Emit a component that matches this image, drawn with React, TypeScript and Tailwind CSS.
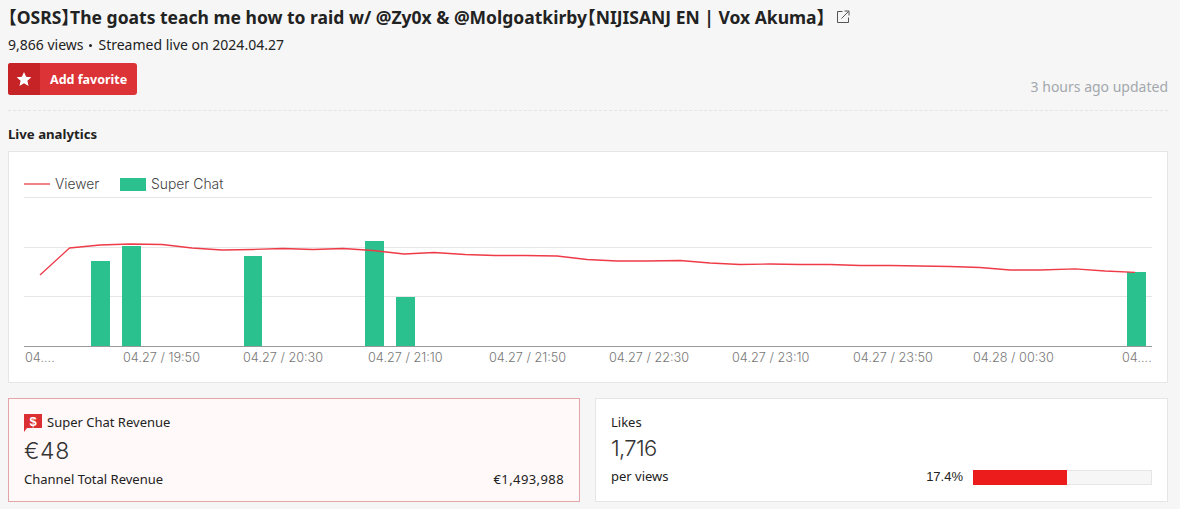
const LINE = "40,275 69.5,248 100,245 130,244 162,244.5 192,248 222,250 253,249.5 283,248.5 313,249.5 343,248.5 373,250.5 404,254 434,252.5 465,254.5 495,255.5 525,255.5 557,256 587,259.5 617,261 647,261 680,260.5 710,263 740,264.5 770,264 800,264.5 830,264.5 860,265.5 890,265.5 920,266 950,266.5 980,267.5 1010,270 1040,270 1075,268.8 1105,271 1135,272.3";
const BARS = [
  [91, 19, 261],
  [122, 19, 246],
  [244, 18, 256],
  [365, 19, 241],
  [396, 19, 297],
  [1127, 19, 272],
];
const LABELS: [number, string][] = [
  [25, "04...."],
  [123, "04.27 / 19:50"],
  [243, "04.27 / 20:30"],
  [368, "04.27 / 21:10"],
  [489, "04.27 / 21:50"],
  [609, "04.27 / 22:30"],
  [732, "04.27 / 23:10"],
  [853, "04.27 / 23:50"],
  [973, "04.28 / 00:30"],
  [1122, "04...."],
];
const sans = "font-['Noto_Sans','Noto_Sans_CJK_JP',sans-serif]";

function Chart() {
  return (
    <svg viewBox="9 152 1158 229" className="block w-full h-[229px]" style={{ fontFamily: "Inter, sans-serif" }}>
      <line x1="24" x2="50" y1="184" y2="184" stroke="#ee3b47" strokeWidth="1.3" />
      <text x="55" y="189" fontSize="13.8" fontWeight="300" fill="#444">Viewer</text>
      <rect x="120" y="178" width="26" height="13" fill="#2ac18f" />
      <text x="151" y="189" fontSize="13.9" fontWeight="300" fill="#444">Super Chat</text>
      {[197, 247, 296].map((y) => (
        <line key={y} x1="24" x2="1152" y1={y + 0.5} y2={y + 0.5} stroke="#e6e6e6" />
      ))}
      {BARS.map(([x, w, top]) => (
        <rect key={x} x={x} y={top} width={w} height={346 - top} fill="#2ac18f" />
      ))}
      <line x1="24" x2="1152" y1="346.5" y2="346.5" stroke="#999" />
      <polyline points={LINE} fill="none" stroke="#ee3b47" strokeWidth="1.3" strokeLinejoin="round" />
      {LABELS.map(([x, t]) => (
        <text key={x} x={x} y="362" fontSize="12.7" fontWeight="300" fill="#777">{t}</text>
      ))}
    </svg>
  );
}

export default function App() {
  return (
    <div className={`h-[509px] overflow-hidden bg-[#f6f6f6] pl-2 pr-[12px] text-[#222] ${sans}`}>
      <div className="flex h-[32px] items-center pt-[1px]">
        <h1 className="text-[17.5px] font-bold leading-[32px] text-[#222] whitespace-nowrap [font-feature-settings:'halt']">【OSRS】The goats teach me how to raid w/ @Zy0x &amp; @Molgoatkirby【NIJISANJ EN | Vox Akuma】</h1>
        <svg width="14" height="14" viewBox="0 0 14 14" fill="none" stroke="#555" strokeWidth="1" className="ml-[11px] shrink-0">
          <path d="M6.5 1.5H1.5V12.5H12.5V7.5" />
          <path d="M5.5 8.5L12.5 1.5M8.5 1H13V5.5" />
        </svg>
      </div>
      <div className="mt-[1px] flex h-[24px] items-center text-[14px] leading-[24px]">
        <span>9,866 views</span>
        <span className="mx-[6px] h-[3px] w-[3px] rounded-full bg-[#222]" />
        <span>Streamed live on 2024.04.27</span>
      </div>
      <div className="mt-[6px] flex h-[48px] items-start justify-between border-b border-dashed border-[#e4e4e4]">
        <button className="flex h-[32px] w-[129px] overflow-hidden rounded-[3px] bg-[#db3336] text-white">
          <span className="flex h-full w-[32px] items-center justify-center bg-[#c62326]">
            <svg width="16" height="16" viewBox="0 0 24 24" fill="#fff">
              <path d="M12 1.5l3.2 7.2 7.8.8-5.9 5.2 1.7 7.7L12 18.4l-6.8 4 1.7-7.7L1 9.5l7.8-.8z" />
            </svg>
          </span>
          <span className="ml-[10px] pt-[1px] text-[12.5px] font-bold leading-[32px]">Add favorite</span>
        </button>
        <span className="mt-[12px] text-[14px] leading-[24px] text-[#a3a8ad]">3 hours ago updated</span>
      </div>
      <h2 className="mt-[13px] text-[13.2px] font-bold leading-[20px] text-[#222]">Live analytics</h2>
      <div className="mt-[7px] h-[232px] border border-[#e6e6e6] bg-white">
        <Chart />
      </div>
      <div className="mt-[15px] flex gap-[15px]">
        <div className="h-[104px] w-[572px] border border-[#e3a5a8] bg-[#fff9f9] px-[15px] pt-[14px]">
          <div className="flex h-[20px] items-center text-[13px]">
            <svg width="18" height="18" viewBox="0 0 18 18" className="mr-[5px] shrink-0">
              <path d="M0 0H18V14H3L0 18Z" fill="#dc2f33" />
              <text x="9" y="12" textAnchor="middle" fontSize="13" fontWeight="700" fill="#fff" fontFamily="Liberation Sans, sans-serif">$</text>
            </svg>
            <span>Super Chat Revenue</span>
          </div>
          <div className="mt-[3px] h-[30px] text-[23px] font-light tracking-[0.6px] leading-[30px] text-[#333] font-['Inter',sans-serif]">€48</div>
          <div className="mt-[4px] flex h-[20px] items-center justify-between text-[13px]">
            <span>Channel Total Revenue</span>
            <span className="tracking-[0.4px]">€1,493,988</span>
          </div>
        </div>
        <div className="h-[104px] flex-1 border border-[#e6e6e6] bg-white px-[15px] pt-[13px]">
          <div className="h-[20px] text-[13px] leading-[20px]">Likes</div>
          <div className="mt-[1px] h-[30px] text-[22px] font-light tracking-[-0.6px] leading-[30px] text-[#333] font-['Inter',sans-serif]">1,716</div>
          <div className="mt-[4px] flex h-[20px] items-center text-[13px]">
            <span>per views</span>
            <span className="ml-auto mr-[10px] font-['Liberation_Sans',sans-serif]">17.4%</span>
            <div className="flex h-[15px] w-[179px]">
              <div className="h-full w-[94px] bg-[#ec1c1c]" />
              <div className="h-full flex-1 border border-l-0 border-[#e6e6e6] bg-[#f6f6f6]" />
            </div>
          </div>
        </div>
      </div>
    </div>
  );
}
